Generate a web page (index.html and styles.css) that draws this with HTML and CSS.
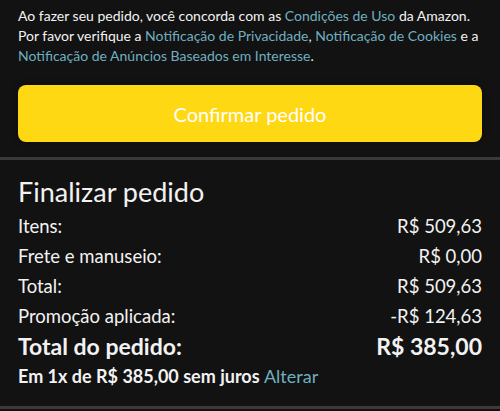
FILE: index.html
```html
<!DOCTYPE html>
<html lang="pt-BR">

<head>
    <meta charset="UTF-8" />
    <meta name="viewport" content="width=device-width, initial-scale=1.0" />
    <link rel="stylesheet" href="styles.css">
</head>

<body>
    <div class="place-order">
        <p class="terms">
            Ao fazer seu pedido, você concorda com as <a href="#">Condições de Uso</a> da Amazon.<br>
            Por favor verifique a <a href="#">Notificação de Privacidade</a>, <a href="#">Notificação de Cookies</a> e a<br>
            <a href="#">Notificação de Anúncios Baseados em Interesse</a>.
        </p>
        <button class="confirm-btn">Confirmar pedido</button>
    </div>

    <div class="summary">
        <p class="summary-title">Finalizar pedido</p>
        <div class="row">
            <span>Itens:</span>
            <span>R$ 509,63</span>
        </div>
        <div class="row">
            <span>Frete e manuseio:</span>
            <span>R$ 0,00</span>
        </div>
        <div class="row">
            <span>Total:</span>
            <span>R$ 509,63</span>
        </div>
        <div class="row">
            <span>Promoção aplicada:</span>
            <span>-R$ 124,63</span>
        </div>
        <div class="row grand-total">
            <span>Total do pedido:</span>
            <span>R$ 385,00</span>
        </div>
        <p class="installments">Em 1x de R$ 385,00 sem juros <a href="#">Alterar</a></p>
    </div>
</body>

</html>
```

FILE: styles.css
```css
body {
    font-family: Lato, "Open Sans", sans-serif;
    background-color: #121212;
    color: #f2f2f2;
    margin: 0;
}

a {
    color: #6fb0c0;
    text-decoration: none;
}

.place-order {
    padding: 6px 18px 15px;
    border-bottom: 3px solid #3a3a3a;
}

.terms {
    margin: 0 0 19px;
    font-size: 14px;
    line-height: 20px;
    white-space: nowrap;
}

.confirm-btn {
    display: block;
    width: 100%;
    height: 57px;
    background-color: #ffd814;
    color: #fff;
    border: none;
    border-radius: 8px;
    font-family: inherit;
    font-size: 20px;
    box-shadow: 0 0 6px rgba(0, 0, 0, 0.5);
}

.summary {
    padding: 16px 18px 15px;
    border-bottom: 3px solid #3a3a3a;
}

.summary-title {
    margin: 0 0 3px;
    font-size: 27px;
    line-height: 32px;
}

.row {
    display: flex;
    justify-content: space-between;
    font-size: 18.5px;
    line-height: 30px;
}

.grand-total {
    font-size: 23px;
    font-weight: bold;
}

.installments {
    margin: 0;
    font-size: 18px;
    font-weight: bold;
    line-height: 30px;
}

.installments a {
    font-weight: normal;
}
```
